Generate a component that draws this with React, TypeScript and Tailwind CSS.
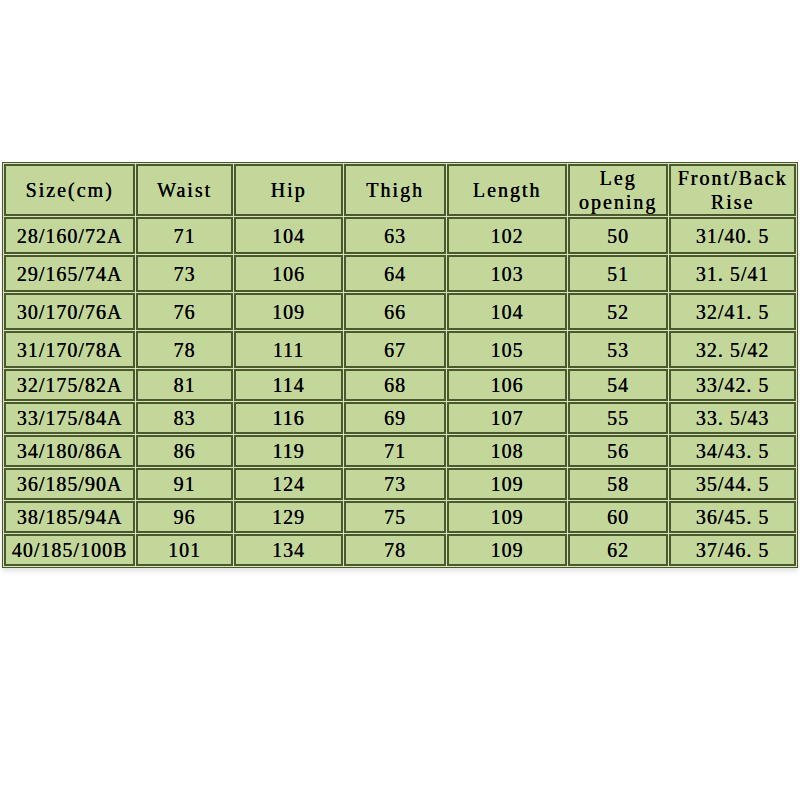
import React from "react";

// Size chart — trousers, measurements in cm
const HEADERS = ["Size(cm)", "Waist", "Hip", "Thigh", "Length", "Leg\nopening", "Front/Back\nRise"];

const COL_WIDTHS = ["w-[131px]", "w-[97px]", "w-[109px]", "w-[102px]", "w-[120px]", "w-[100px]", "w-[127px]"];

const ROWS: string[][] = [
  ["28/160/72A", "71", "104", "63", "102", "50", "31/40.5"],
  ["29/165/74A", "73", "106", "64", "103", "51", "31.5/41"],
  ["30/170/76A", "76", "109", "66", "104", "52", "32/41.5"],
  ["31/170/78A", "78", "111", "67", "105", "53", "32.5/42"],
  ["32/175/82A", "81", "114", "68", "106", "54", "33/42.5"],
  ["33/175/84A", "83", "116", "69", "107", "55", "33.5/43"],
  ["34/180/86A", "86", "119", "71", "108", "56", "34/43.5"],
  ["36/185/90A", "91", "124", "73", "109", "58", "35/44.5"],
  ["38/185/94A", "96", "129", "75", "109", "60", "36/45.5"],
  ["40/185/100B", "101", "134", "78", "109", "62", "37/46.5"],
];

// the first four rows in the picture are a little taller than the rest
const rowHeight = (idx: number) => (idx < 4 ? "h-[37px]" : "h-[32px]");

// "32.5/42" → the dot sits in a wide slot like the original font
function formatCell(text: string) {
  return text.replace(/\./g, ". ");
}

export default function App() {
  return (
    <div
      className="w-[800px] h-[800px] bg-white pt-[162px] px-[2px]"
      style={{ fontFamily: '"Liberation Serif", "DejaVu Serif", serif' }}
    >
      <table className="table-fixed w-[796px] border-separate border-spacing-[1px] bg-[#d8e4bc] border border-[#4a5a2c] shadow-[0_3px_5px_rgba(0,0,0,0.12)] text-black text-[20px] tracking-[1px]">
        <colgroup>
          {COL_WIDTHS.map((w, i) => (
            <col key={i} className={w} />
          ))}
        </colgroup>
        <thead>
          <tr className="h-[50px]">
            {HEADERS.map((h) => (
              <th
                key={h}
                className="bg-[#c4d79b] border-2 border-[#4a5a2c] font-normal tracking-[2px] text-center align-middle leading-[24px] whitespace-pre-line p-0 [text-shadow:0.4px_0_0_#000]"
              >
                {h}
              </th>
            ))}
          </tr>
        </thead>
        <tbody>
          {ROWS.map((row, idx) => (
            <tr key={row[0]} className={rowHeight(idx)}>
              {row.map((cell, ci) => (
                <td
                  key={ci}
                  className="bg-[#c4d79b] border-2 border-[#4a5a2c] text-center align-middle p-0 leading-none whitespace-pre [text-shadow:0.3px_0_0_#000]"
                >
                  {formatCell(cell)}
                </td>
              ))}
            </tr>
          ))}
        </tbody>
      </table>
    </div>
  );
}
